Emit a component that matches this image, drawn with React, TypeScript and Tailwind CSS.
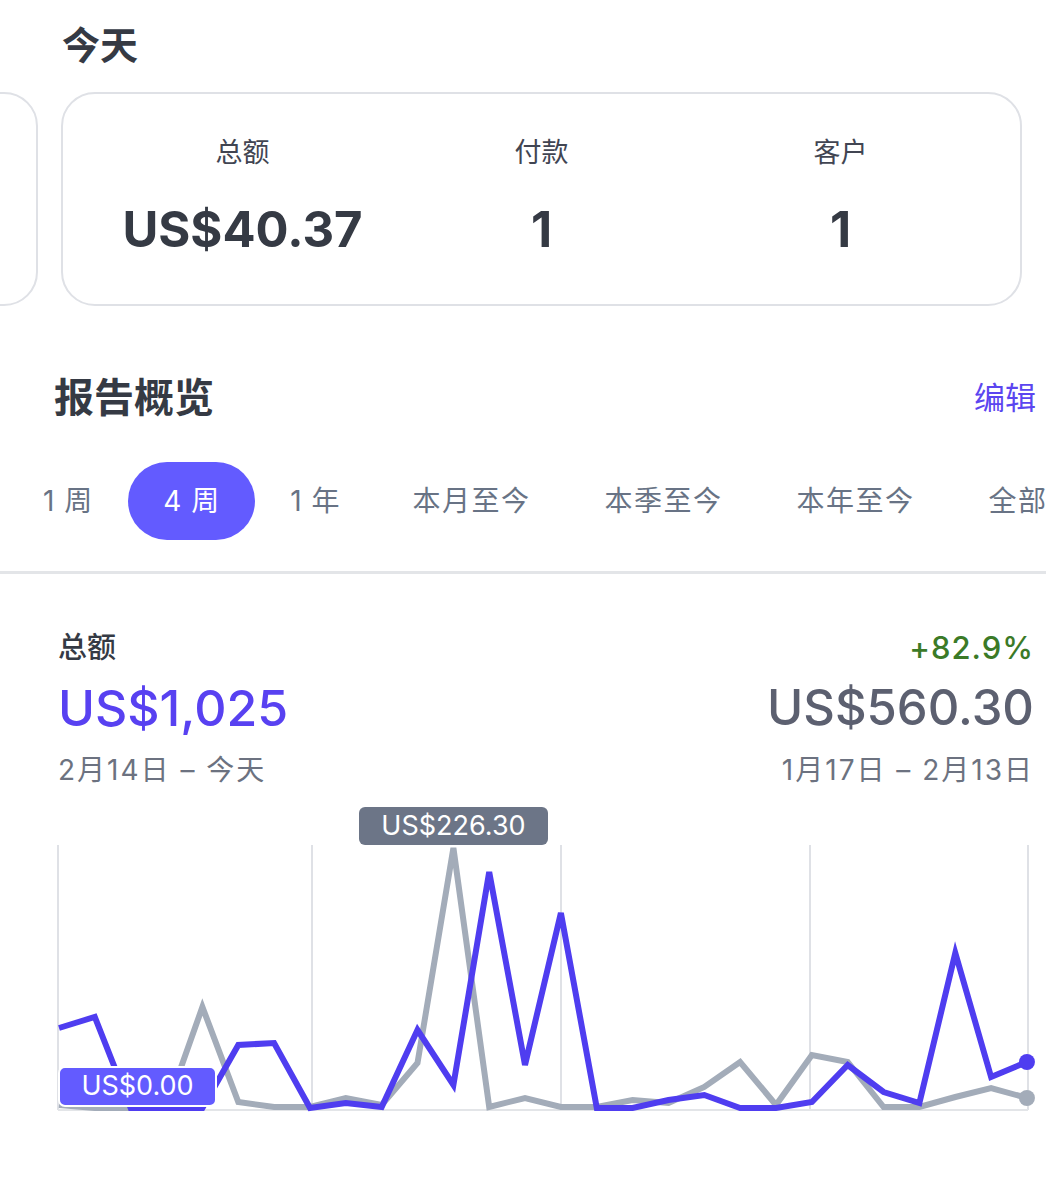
import React from 'react'

const FONT = 'font-[Inter,"Noto_Sans_CJK_SC",sans-serif]'

const TABS = [
  { label: '1 周', cls: 'px-[35px] tracking-[1px]' },
  { label: '4 周', cls: 'px-[35px] tracking-[1px]', active: true },
  { label: '1 年', cls: 'px-[35px] tracking-[1px]' },
  { label: '本月至今', cls: 'px-[37px] tracking-[1.5px]' },
  { label: '本季至今', cls: 'px-[37px] tracking-[1.5px]' },
  { label: '本年至今', cls: 'px-[37px] tracking-[1.5px]' },
  { label: '全部', cls: 'px-[37px] tracking-[1.5px]' },
]

const STEP = 35.85
const X0 = 59
const TOP = 800

// 日数据（页面坐标的 y）
const CURRENT = [1028, 1017, 1108, 1108, 1108, 1045, 1043, 1108, 1103, 1107, 1030, 1085, 872, 1065, 913, 1108, 1108, 1100, 1095, 1108, 1108, 1102, 1065, 1092, 1103, 953, 1077, 1062]
const PREVIOUS = [1105, 1108, 1108, 1108, 1007, 1102, 1107, 1107, 1098, 1105, 1063, 848, 1107, 1098, 1107, 1107, 1100, 1103, 1087, 1062, 1105, 1055, 1062, 1107, 1107, 1097, 1088, 1098]

const toPoints = (ys: number[]) =>
  ys.map((y, i) => `${(X0 + i * STEP).toFixed(1)},${y - TOP}`).join(' ')

const GRID = [58, 312, 561, 810, 1028]

const Stat = ({ label, value }: { label: string; value: string }) => (
  <div className="flex w-[299px] flex-col items-center">
    <div className="h-[40px] text-[27px] leading-[40px] text-[#414552]">{label}</div>
    <div className="mt-[27px] h-[60px] text-[49px] leading-[60px] font-bold text-[#353a44]">{value}</div>
  </div>
)

const Chart = () => {
  const last = CURRENT.length - 1
  const lx = X0 + last * STEP
  return (
    <div className="relative mt-[10px] h-[330px] w-full">
      <svg width="1046" height="330" viewBox="0 0 1046 330" className="block">
        {GRID.map((x) => (
          <line key={x} x1={x} y1={45} x2={x} y2={310} stroke="#dfe1e6" strokeWidth="2" />
        ))}
        <line x1={58} y1={310} x2={1028} y2={310} stroke="#e3e5e8" strokeWidth="2" />
        <polyline points={toPoints(PREVIOUS)} fill="none" stroke="#a3acb9" strokeWidth="6" />
        <polyline points={toPoints(CURRENT)} fill="none" stroke="#4f3df0" strokeWidth="6" />
        <circle cx={lx} cy={PREVIOUS[last] - TOP} r="8" fill="#a3acb9" />
        <circle cx={lx} cy={CURRENT[last] - TOP} r="8" fill="#4f3df0" />
      </svg>

      {/* 悬浮标签 */}
      <div className="absolute top-[7px] left-[359px] flex h-[38px] w-[189px] items-center justify-center rounded-[6px] bg-[#6c7587] text-[27px] text-white">
        US$226.30
      </div>
      <div className="absolute top-[266px] left-[58px] flex h-[41px] w-[159px] items-center justify-center rounded-[7px] border-2 border-white bg-[#635bff] text-[27px] text-white">
        US$0.00
      </div>
    </div>
  )
}

export default function App() {
  return (
    <div className={`h-[1200px] w-[1046px] overflow-hidden bg-white ${FONT}`}>
      {/* 今天 */}
      <div className="mt-[20px] h-[50px] pl-[62px] text-[38px] leading-[50px] font-bold text-[#353a44]">今天</div>

      <div className="mt-[22px] overflow-hidden">
        <div className="ml-[-262px] flex gap-[23px]">
          <div className="h-[214px] w-[300px] shrink-0 rounded-[34px] border-2 border-[#dfe1e6]"></div>
          <div className="flex h-[214px] w-[961px] shrink-0 rounded-[34px] border-2 border-[#dfe1e6] pt-[39px] pl-[30px]">
            <Stat label="总额" value="US$40.37" />
            <Stat label="付款" value="1" />
            <Stat label="客户" value="1" />
          </div>
        </div>
      </div>

      {/* 报告概览 */}
      <div className="mt-[67px] flex h-[50px] items-center justify-between pr-[10px] pl-[54px]">
        <div className="text-[40px] leading-[50px] font-bold text-[#353a44]">报告概览</div>
        <div className="text-[31px] leading-[50px] text-[#5b45f0]">编辑</div>
      </div>

      <div className="mt-[39px] flex h-[78px] pl-[8px]">
        {TABS.map((t) => (
          <div
            key={t.label}
            className={`flex h-[78px] shrink-0 items-center text-[28px] whitespace-nowrap ${t.cls} ${
              t.active ? 'rounded-full bg-[#635bff] text-white' : 'text-[#687385]'
            }`}
          >
            {t.label}
          </div>
        ))}
      </div>

      <div className="mt-[31px] h-[3px] w-full bg-[#e3e5e8]"></div>

      {/* 总额图表 */}
      <div className="mt-[54px] flex h-[40px] items-center justify-between pr-[12px] pl-[58px]">
        <div className="text-[29px] leading-[40px] font-medium text-[#353a44]">总额</div>
        <div className="text-[31px] leading-[40px] font-medium tracking-[1px] text-[#3b7a27]">+82.9%</div>
      </div>
      <div className="mt-[10px] flex h-[60px] items-center justify-between pr-[12px] pl-[58px]">
        <div className="text-[50px] leading-[60px] font-medium text-[#5841f1]">US$1,025</div>
        <div className="text-[49px] leading-[60px] font-medium text-[#5c6070]">US$560.30</div>
      </div>
      <div className="mt-[12px] flex h-[40px] items-center justify-between pr-[12px] pl-[58px]">
        <div className="text-[28px] leading-[40px] tracking-[2px] text-[#6c7280]">2月14日 – 今天</div>
        <div className="text-[28px] leading-[40px] tracking-[2px] text-[#6c7280]">1月17日 – 2月13日</div>
      </div>

      <Chart />
    </div>
  )
}
